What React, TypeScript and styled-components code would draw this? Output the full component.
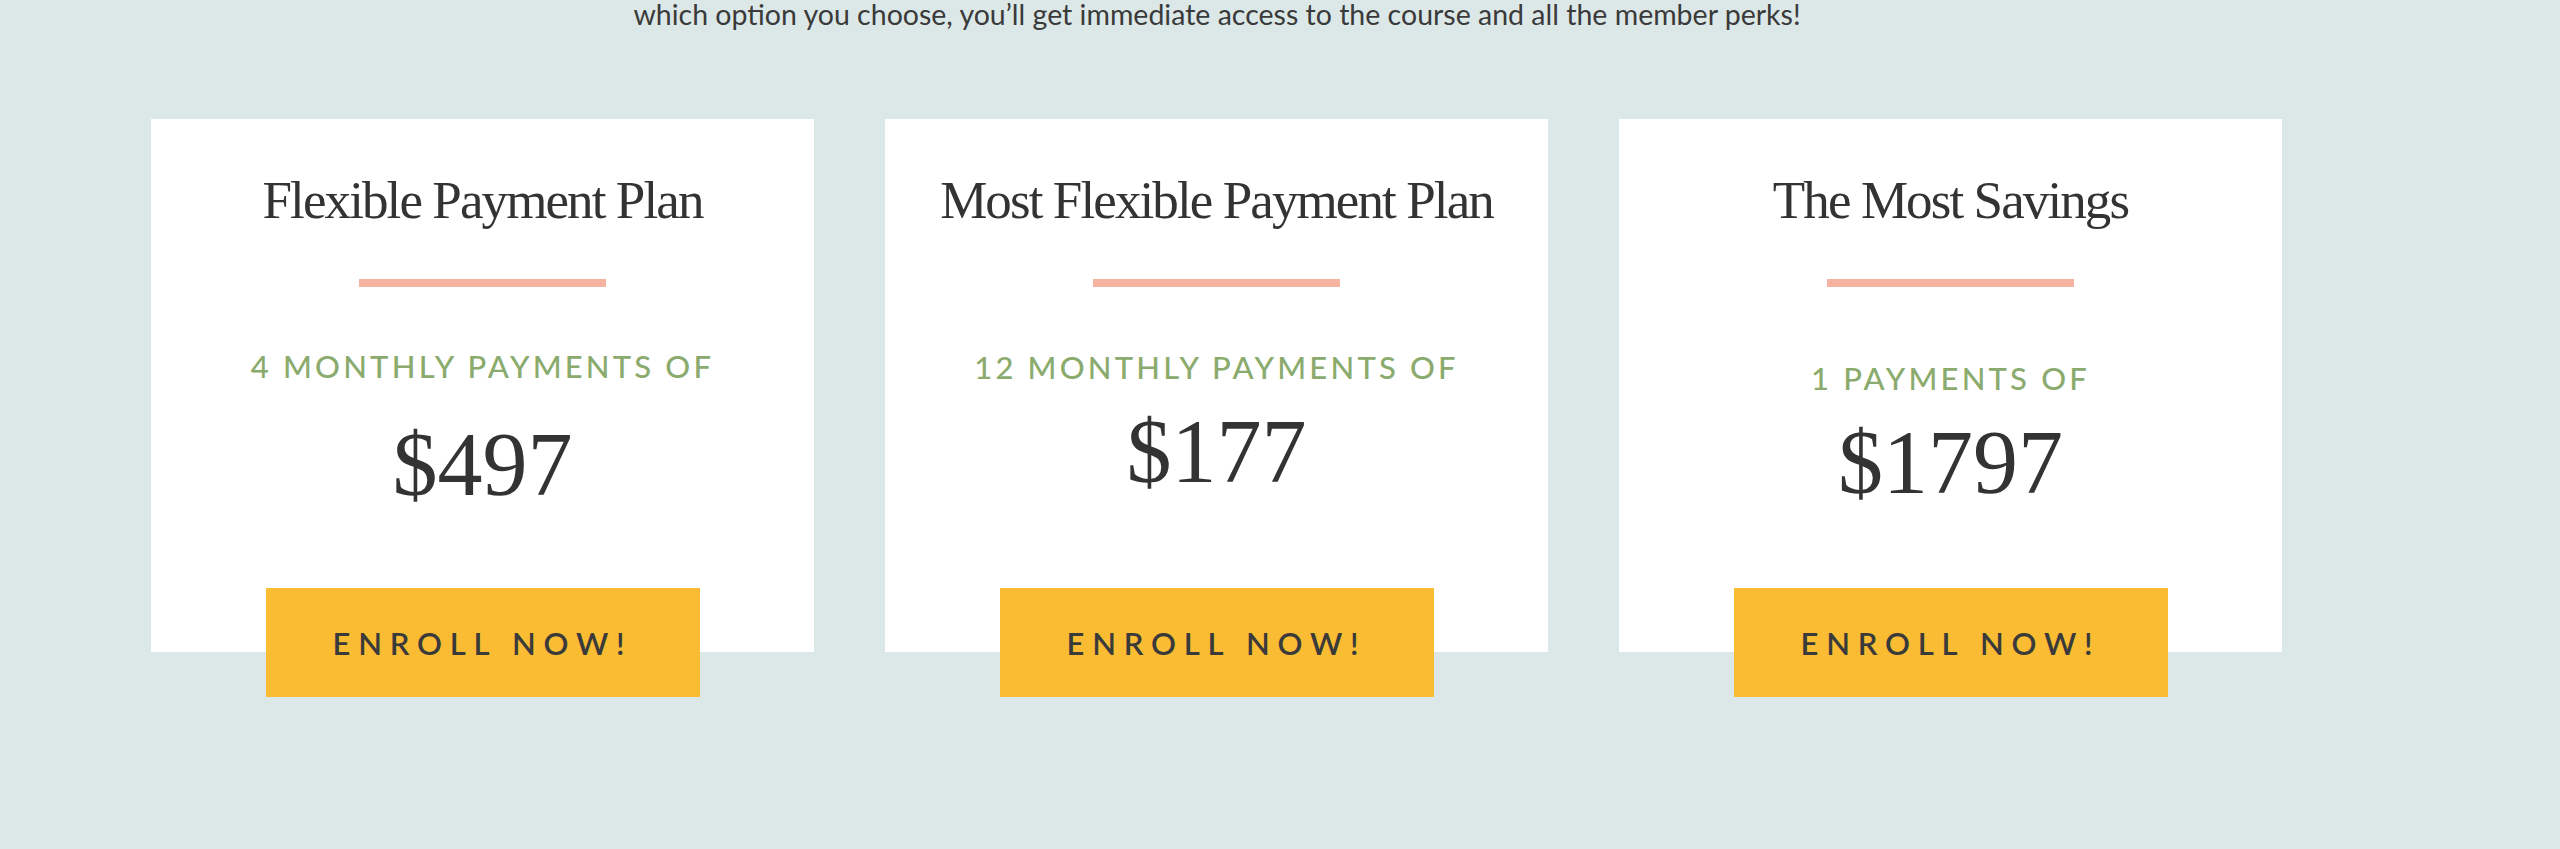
import styled, { createGlobalStyle } from 'styled-components';

const GlobalStyle = createGlobalStyle`
  html, body {
    margin: 0;
    padding: 0;
    background: #dce8e8;
  }
`;

const Page = styled.div`
  width: 2132px;
  padding-left: 151px;
  height: 849px;
  box-sizing: content-box;
  overflow: hidden;
`;

const Intro = styled.p`
  margin: 0;
  font-family: Lato, 'Noto Sans', sans-serif;
  font-size: 28.5px;
  line-height: 28px;
  color: #3a3a3a;
  text-align: center;
`;

const Cards = styled.div`
  display: grid;
  grid-template-columns: repeat(3, 663px);
  column-gap: 71px;
  margin-top: 91px;
`;

const Card = styled.div`
  height: 533px;
  background: #ffffff;
  display: flex;
  flex-direction: column;
  align-items: center;
  padding-top: 49px;
  box-sizing: border-box;
`;

const Title = styled.h2`
  margin: 0;
  font-family: 'Liberation Serif', serif;
  font-weight: 400;
  font-size: 53px;
  line-height: 64px;
  letter-spacing: -1.9px;
  color: #333333;
  white-space: nowrap;
`;

const Divider = styled.div`
  width: 247px;
  height: 8px;
  margin-top: 47px;
  background: #f7b3a2;
`;

const Subtitle = styled.div<{ $gap: number }>`
  margin-top: ${({ $gap }) => $gap}px;
  font-family: Lato, 'Noto Sans', sans-serif;
  font-weight: 500;
  font-size: 31px;
  line-height: 36px;
  letter-spacing: 3.2px;
  color: #8aab6d;
  text-transform: uppercase;
`;

const Price = styled.div<{ $gap: number }>`
  margin-top: ${({ $gap }) => $gap}px;
  font-family: 'Liberation Serif', serif;
  font-size: 90px;
  line-height: 100px;
  color: #333333;
`;

const EnrollButton = styled.button`
  margin-top: auto;
  margin-bottom: -45px;
  width: 434px;
  height: 109px;
  border: none;
  background: #f9bc33;
  font-family: Lato, 'Noto Sans', sans-serif;
  font-weight: 600;
  font-size: 31px;
  letter-spacing: 7.8px;
  color: #3a3a3a;
  text-transform: uppercase;
  cursor: pointer;
`;

type Plan = {
  title: string;
  label: string;
  price: string;
  subGap: number;
  priceGap: number;
};

const plans: Plan[] = [
  { title: 'Flexible Payment Plan', label: '4 Monthly Payments Of', price: '$497', subGap: 61, priceGap: 31 },
  { title: 'Most Flexible Payment Plan', label: '12 Monthly Payments Of', price: '$177', subGap: 62, priceGap: 17 },
  { title: 'The Most Savings', label: '1 Payments Of', price: '$1797', subGap: 73, priceGap: 17 },
];

const App = () => (
  <>
    <GlobalStyle />
    <Page>
      <Intro>
        which option you choose, you’ll get immediate access to the course and all the member perks!
      </Intro>
      <Cards>
        {plans.map((plan) => (
          <Card key={plan.title}>
            <Title>{plan.title}</Title>
            <Divider />
            <Subtitle $gap={plan.subGap}>{plan.label}</Subtitle>
            <Price $gap={plan.priceGap}>{plan.price}</Price>
            <EnrollButton>Enroll Now!</EnrollButton>
          </Card>
        ))}
      </Cards>
    </Page>
  </>
);

export default App;
